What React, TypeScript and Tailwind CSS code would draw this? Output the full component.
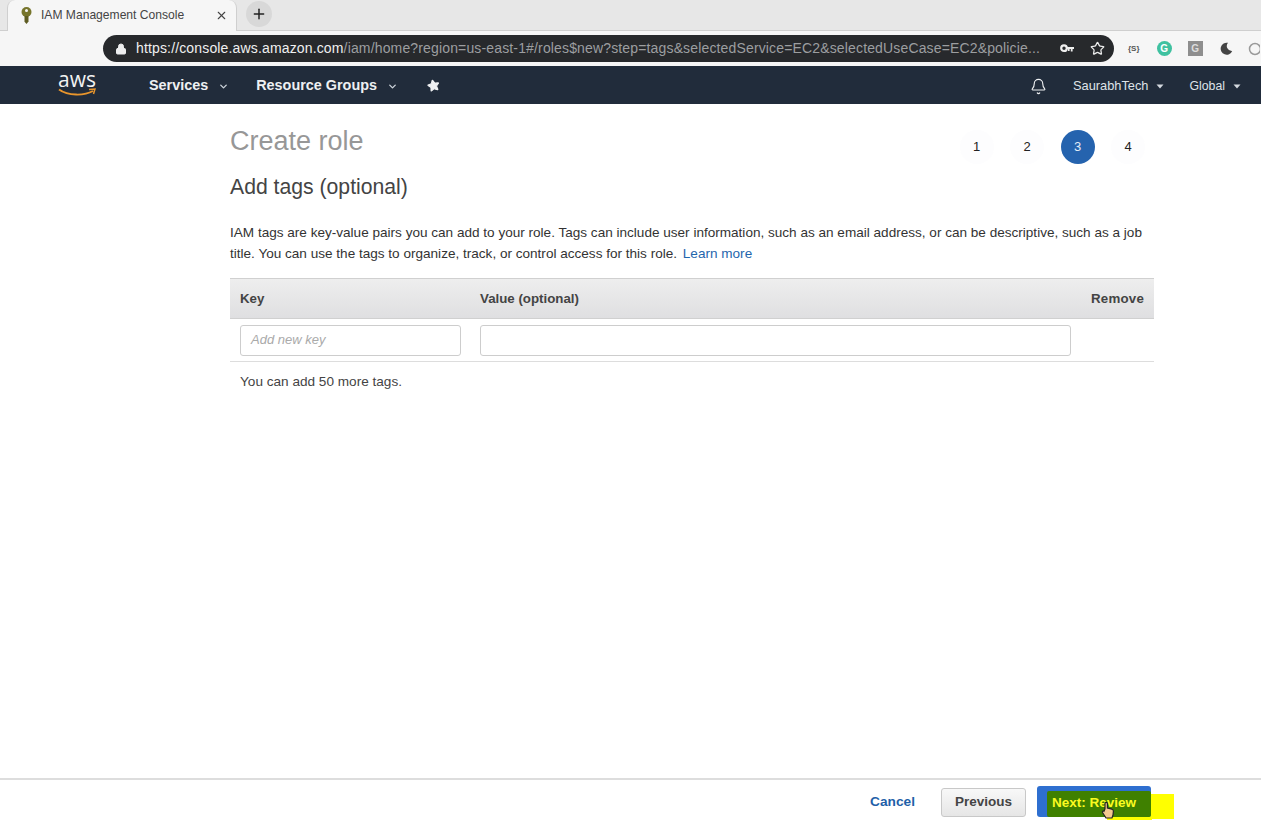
import { Star, X, Plus, Lock, Bell, ChevronDown } from "lucide-react";

const Caret = () => (
  <svg width="8" height="5" viewBox="0 0 8 5" className="ml-2"><path d="M0.5 0.5H7.5L4 4.5Z" fill="#d5dae0" /></svg>
);
const Chev = () => <ChevronDown size={11} strokeWidth={3} color="#cbd2d9" className="ml-[10px]" />;

const Step = ({ n, active }: { n: number; active?: boolean }) => (
  <div
    className={
      active
        ? "w-[34px] h-[34px] rounded-full bg-[#2563ae] text-[#e4ecf6] flex items-center justify-center text-[13px]"
        : "w-[34px] h-[34px] rounded-full bg-[#fdfdfe] text-[#222] flex items-center justify-center text-[13px]"
    }
  >
    {n}
  </div>
);

export default function App() {
  return (
    <div className="w-[1261px] h-[823px] overflow-hidden flex flex-col bg-white text-[#333] font-['Liberation_Sans',Arial,sans-serif]">
      {/* tab strip */}
      <div className="h-[31px] shrink-0 bg-[#e7e7e7] border-b border-[#cfcfcf] flex items-end pl-[7px]">
        <div className="w-[230px] h-[31px] bg-[#f6f6f6] border-r border-l border-[#cfcfcf] rounded-t-lg flex items-center pl-[13px] pr-[8px] relative top-px">
          <svg width="11" height="17" viewBox="0 0 11 17">
            <circle cx="5.5" cy="5" r="5" fill="#77752c" />
            <circle cx="5.5" cy="3.6" r="1.5" fill="#f6f6f6" />
            <path d="M3.5 9h4v5.5L5.5 17l-2-2.2z" fill="#5e5c22" />
          </svg>
          <span className="ml-[9px] text-[12.1px] text-[#444] whitespace-nowrap">IAM Management Console</span>
          <X size={13} strokeWidth={2} color="#444" className="ml-auto" />
        </div>
        <div className="ml-[9px] mb-[3px] w-[26px] h-[26px] rounded-full bg-[#d8d8d8] flex items-center justify-center">
          <Plus size={16} strokeWidth={2.2} color="#222" />
        </div>
      </div>

      {/* toolbar */}
      <div className="h-[35px] shrink-0 bg-[#f6f6f6] flex items-center pl-[103px]">
        <div className="w-[1011px] h-[27px] rounded-full bg-[#27292c] flex items-center pl-[12px] pr-[9px]">
          <Lock size={12} color="#eee" fill="#eee" strokeWidth={2} />
          <span className="ml-[9px] text-[14px] whitespace-nowrap text-[#f0f0f0] w-[906px] overflow-hidden tracking-[0.15px]">
            https://console.aws.amazon.com<span className="text-[#9c9ea0]">/iam/home?region=us-east-1#/roles$new?step=tags&amp;selectedService=EC2&amp;selectedUseCase=EC2&amp;policie...</span>
          </span>
          <svg width="14" height="9" viewBox="0 0 14 9" className="ml-auto">
            <circle cx="4" cy="4.2" r="2.8" fill="none" stroke="#eee" strokeWidth="2.2" />
            <path d="M6.5 3H14V5H12.6V7.5H10.8V5H9.6V7H8V5H6.5Z" fill="#eee" />
          </svg>
          <Star size={15} color="#eee" strokeWidth={2} className="ml-[16px]" />
        </div>
        <span className="ml-[14px] text-[8px] font-bold text-[#555]">{"{S}"}</span>
        <div className="ml-[17px] w-[15px] h-[15px] rounded-full bg-[#3fc1a0] flex items-center justify-center text-white text-[10px] font-bold">G</div>
        <div className="ml-[16px] w-[15px] h-[15px] bg-[#8e8e8e] flex items-center justify-center text-[#ddd] text-[10px] font-bold">G</div>
        <svg width="13" height="13" viewBox="0 0 13 13" className="ml-[17px]">
          <path d="M8 .8A6 6 0 1 0 12.2 9 5 5 0 0 1 8 .8Z" fill="#444" />
        </svg>
        <svg width="12" height="14" viewBox="0 0 12 14" className="ml-[15px]">
          <circle cx="7" cy="7" r="5.5" fill="none" stroke="#9a9a9a" strokeWidth="1.5" />
        </svg>
      </div>

      {/* aws nav */}
      <div className="h-[38px] shrink-0 bg-[#212c3b] flex items-center text-white pt-[2px]">
        <div className="ml-[57px] w-[40px] flex flex-col items-center leading-none -mt-[4px]">
          <span className="text-[21px] leading-[16px] text-[#f2f2f2] font-['Open_Sans',sans-serif]">aws</span>
          <svg width="38" height="9" viewBox="0 0 38 9" className="mt-[1px]">
            <path d="M1 1.5C10 8 26 8 35 3" stroke="#e8952c" strokeWidth="1.9" fill="none" />
            <path d="M31 1.5L37 1L35.5 6" stroke="#e8952c" strokeWidth="1.5" fill="none" />
          </svg>
        </div>
        <span className="ml-[52px] text-[14.4px] font-bold text-[#eef0f2]">Services</span>
        <Chev />
        <span className="ml-[27px] text-[14.4px] font-bold text-[#eef0f2]">Resource Groups</span>
        <Chev />
        <Star size={13} fill="#eef0f2" color="#eef0f2" className="ml-[29px] -rotate-12 -mt-[2px]" />
        <Bell size={17} color="#eef0f2" strokeWidth={1.6} className="ml-auto" />
        <span className="ml-[26px] text-[12.8px] text-[#dfe3e8]">SaurabhTech</span>
        <Caret />
        <span className="ml-[25px] text-[12.3px] text-[#dfe3e8]">Global</span>
        <span className="mr-[20px]"><Caret /></span>
      </div>

      {/* content */}
      <main className="flex-1 pl-[230px] pr-[107px] relative">
        <div className="flex items-start justify-between h-[65px]">
          <h1 className="mt-[21px] text-[27px] leading-[32px] text-[#979797]">Create role</h1>
          <div className="flex gap-[16.5px] mt-[26px] mr-[9px]">
            <Step n={1} />
            <Step n={2} />
            <Step n={3} active />
            <Step n={4} />
          </div>
        </div>
        <h2 className="mt-[4px] text-[21.2px] leading-[28px] text-[#444]">Add tags (optional)</h2>
        <p className="mt-[21px] text-[13.57px] leading-[21px] text-[#333] w-[930px]">
          IAM tags are key-value pairs you can add to your role. Tags can include user information, such as an email address, or can be descriptive, such as a job
          title. You can use the tags to organize, track, or control access for this role. <span className="text-[#1f66ad] ml-[2px]">Learn more</span>
        </p>

        <div className="mt-[14px] h-[41px] bg-gradient-to-b from-[#eeeeee] to-[#dfdfe1] border-t border-b border-[#d0d0d0] flex items-center text-[13.3px] font-bold text-[#444]">
          <span className="ml-[10px] w-[240px]">Key</span>
          <span>Value (optional)</span>
          <span className="ml-auto mr-[10px] tracking-[0.2px]">Remove</span>
        </div>
        <div className="h-[43px] border-b border-[#dddddd] flex items-center pl-[10px]">
          <div className="w-[221px] h-[31px] rounded-[3px] border border-[#cdcdcd] flex items-center pl-[10px] text-[13px] italic text-[#aaa]">Add new key</div>
          <div className="ml-[19px] w-[591px] h-[31px] rounded-[3px] border border-[#cdcdcd]" />
        </div>
        <p className="mt-[11px] ml-[10px] text-[13.6px] leading-[18px] text-[#444]">You can add 50 more tags.</p>
      </main>

      {/* footer */}
      <div className="h-[45px] shrink-0 border-t-2 border-[#dddddd] flex items-center justify-end pt-[2px]">
        <span className="text-[13.7px] font-bold text-[#1f5fa8] mr-[26px]">Cancel</span>
        <div className="w-[85px] h-[29px] rounded-[3px] border border-[#c8c8c8] bg-gradient-to-b from-[#f8f8f8] to-[#e6e6e6] flex items-center justify-center text-[13.5px] font-bold text-[#444]">Previous</div>
        <div className="relative ml-[11px] mr-[109px] w-[115px] h-[31px] -top-[1px]">
          <div className="absolute left-[70px] top-[29px] w-[45px] h-[5px] bg-[#ffff00]" />
          <div className="absolute left-[113px] top-[8px] w-[24px] h-[25px] bg-[#ffff00]" />
          <div className="absolute inset-0 right-[1px] rounded-[3px] bg-[#2e6fd0]" />
          <div className="absolute left-[10px] top-[5px] w-[104px] h-[26px] rounded-[2px] bg-[#3f8000]" />
          <span className="absolute left-[15px] top-[7px] text-[13.5px] font-bold text-[#fbfb20] whitespace-nowrap">Next: Review</span>
          <svg width="14" height="18" viewBox="0 0 14 18" className="absolute left-[64px] top-[15px]">
            <path d="M4 8V2.5a1.2 1.2 0 0 1 2.4 0V7l4.5 1.2c1 .3 1.6 1 1.5 2L12 14l-1 3H5L1.5 11.5c-.6-1 .7-2 1.5-1.2z" fill="#f4c890" stroke="#222" strokeWidth="1.2" />
          </svg>
        </div>
      </div>
    </div>
  );
}
